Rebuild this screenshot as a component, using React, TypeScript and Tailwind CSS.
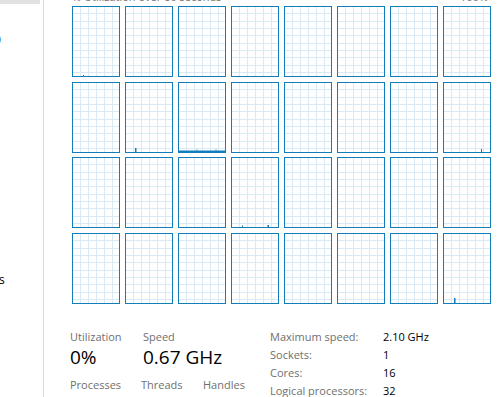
import React from 'react';

// small blips on a few of the per-core graphs (x, y, w, h inside a 48x71 box)
const blips: Record<number, [number, number, number, number][]> = {
    0: [[11, 69, 1, 1]],
    9: [[10, 66, 1.5, 4]],
    10: [[1, 68.5, 46, 1.5], [18.5, 67.5, 1, 1], [37.5, 67.5, 1, 1]],
    15: [[38, 67, 1, 3]],
    19: [[11, 68.5, 1, 1.5], [36.5, 68, 1.5, 2]],
    31: [[11, 65, 1.5, 5]],
};

const CoreGraph: React.FC<{ index: number }> = ({ index }) => {
    const vLines = [8.5, 16.5, 24.5, 32.5, 40.5];
    const hLines = [1, 2, 3, 4, 5, 6, 7, 8, 9].map(i => Math.round(i * 7.33) + 0.5);
    return (
        <svg width="48" height="71" viewBox="0 0 48 71" className="block">
            <rect x="0" y="0" width="48" height="71" fill="#ffffff" />
            {vLines.map(x => (
                <line key={'v' + x} x1={x} y1="1" x2={x} y2="70" stroke="#d9eaf4" strokeWidth="1" />
            ))}
            {hLines.map(y => (
                <line key={'h' + y} x1="1" y1={y} x2="47" y2={y} stroke="#d9eaf4" strokeWidth="1" />
            ))}
            {(blips[index] || []).map(([x, y, w, h], i) => (
                <rect key={i} x={x} y={y} width={w} height={h} fill="#117dbb" />
            ))}
            <rect x="0.5" y="0.5" width="47" height="70" fill="none" stroke="#117dbb" strokeWidth="1" />
        </svg>
    );
};

const specs = [
    ['Maximum speed:', '2.10 GHz'],
    ['Sockets:', '1'],
    ['Cores:', '16'],
    ['Logical processors:', '32'],
];

const App: React.FC = () => {
    return (
        <div className="flex h-[397px] w-[500px] overflow-hidden bg-white font-['Open_Sans',sans-serif] text-[11px] text-black">
            {/* sidebar, cut off on the left */}
            <aside className="flex w-[44px] shrink-0 flex-col overflow-hidden border-r border-[#d9d9d9]">
                <div className="h-[4px] w-[40px] bg-[#e1e1e1]" />
                <div className="-ml-[3px] mt-[26px] text-[13px] leading-[16px]">)</div>
                <div className="-ml-[1px] mt-[226px] text-[12px] leading-[16px]">s</div>
            </aside>

            <main className="flex flex-1 flex-col pl-[28px]">
                <div className="-mt-[10px] flex h-[14px] w-[416px] justify-between leading-[14px] text-[#707070]">
                    <span>% Utilization over 60 seconds</span>
                    <span>100%</span>
                </div>

                <div className="mt-[2px] grid w-[419px] grid-cols-8 gap-x-[5px] gap-y-[4.5px]">
                    {Array.from({ length: 32 }, (_, i) => (
                        <CoreGraph key={i} index={i} />
                    ))}
                </div>

                <div className="-ml-[2px] mt-[24px] flex">
                    <div className="flex w-[200px] flex-col">
                        <div className="flex">
                            <div className="w-[73px]">
                                <div className="leading-[18px] text-[#707070]">Utilization</div>
                                <div className="text-[19px] leading-[23px]">0%</div>
                            </div>
                            <div>
                                <div className="leading-[18px] text-[#707070]">Speed</div>
                                <div className="text-[19px] leading-[23px]">0.67 GHz</div>
                            </div>
                        </div>
                        <div className="mt-[7px] flex leading-[18px] text-[#707070]">
                            <span className="w-[71px]">Processes</span>
                            <span className="w-[62px]">Threads</span>
                            <span>Handles</span>
                        </div>
                    </div>
                    <div className="flex flex-col">
                        {specs.map(([k, v]) => (
                            <div key={k} className="flex leading-[18px]">
                                <span className="w-[113px] text-[#707070]">{k}</span>
                                <span>{v}</span>
                            </div>
                        ))}
                    </div>
                </div>
            </main>
        </div>
    );
};

export default App;
